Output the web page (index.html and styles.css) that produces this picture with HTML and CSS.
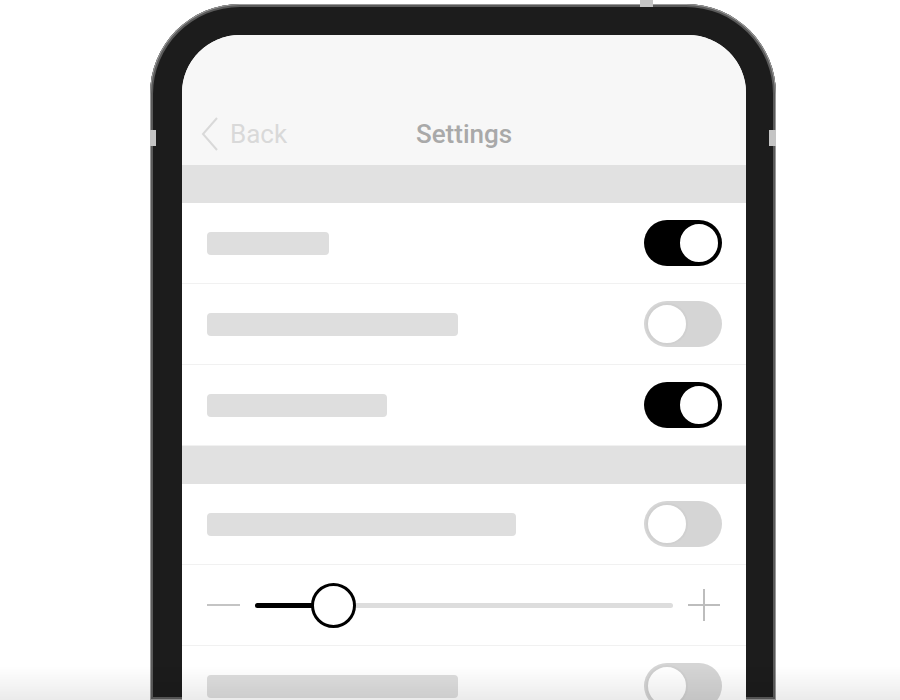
FILE: index.html
```html
<!DOCTYPE html>
<html lang="en">

<head>
    <meta charset="UTF-8">
    <meta name="viewport" content="width=device-width, initial-scale=1.0">
    <title>Settings</title>
    <link rel="stylesheet" href="styles.css">
</head>

<body>
    <div class="phone">
        <!-- antenna bands on the frame -->
        <span class="band band-top"></span>
        <span class="band band-left"></span>
        <span class="band band-right"></span>

        <div class="screen">
            <div class="nav">
                <div class="back">
                    <svg width="20" height="36" viewBox="0 0 20 36">
                        <path d="M17 2 L3 18 L17 34" fill="none" stroke="#d9d9d9" stroke-width="2" />
                    </svg>
                    <span>Back</span>
                </div>
                <div class="title">Settings</div>
                <div></div>
            </div>

            <div class="section-header"></div>
            <div class="row">
                <div class="bar" style="width: 122px"></div>
                <div class="toggle on"><span class="knob"></span></div>
            </div>
            <div class="row">
                <div class="bar" style="width: 251px"></div>
                <div class="toggle"><span class="knob"></span></div>
            </div>
            <div class="row">
                <div class="bar" style="width: 180px"></div>
                <div class="toggle on"><span class="knob"></span></div>
            </div>

            <div class="section-header"></div>
            <div class="row">
                <div class="bar" style="width: 309px"></div>
                <div class="toggle"><span class="knob"></span></div>
            </div>
            <div class="row slider-row">
                <span class="minus"></span>
                <div class="track">
                    <div class="fill"></div>
                    <span class="thumb"></span>
                </div>
                <svg class="plus" width="32" height="32" viewBox="0 0 32 32">
                    <path d="M16 0 V32 M0 16 H32" stroke="#bdbdbd" stroke-width="2" />
                </svg>
            </div>
            <div class="row">
                <div class="bar" style="width: 251px"></div>
                <div class="toggle"><span class="knob"></span></div>
            </div>
        </div>
    </div>
    <div class="fade"></div>
</body>

</html>
```

FILE: styles.css
```css
body {
    font-family: Roboto, "Liberation Sans", Arial, sans-serif;
    margin: 0;
    padding: 0;
    background-color: #ffffff;
    overflow: hidden;
    height: 700px;
}

.phone {
    position: relative;
    width: 626px;
    height: 696px;
    margin: 4px 0 0 150px;
    padding: 31px 30px 0 32px;
    box-sizing: border-box;
    background-color: #1c1c1c;
    border-radius: 90px 90px 0 0;
    box-shadow: inset 0 0 0 1px #9a9a9a, inset 0 0 0 3px #5a5a5a;
}

.band {
    position: absolute;
    background-color: #c4c4c4;
}

.band-top {
    top: -4px;
    left: 490px;
    width: 13px;
    height: 7px;
}

.band-left {
    top: 126px;
    left: 0;
    width: 6px;
    height: 16px;
}

.band-right {
    top: 126px;
    right: 0;
    width: 7px;
    height: 16px;
}

.screen {
    background-color: #ffffff;
    border-radius: 58px 58px 0 0;
    overflow: hidden;
    height: 100%;
}

/* Top navigation bar */
.nav {
    height: 130px;
    background-color: #f7f7f7;
    display: grid;
    grid-template-columns: 1fr auto 1fr;
    align-items: end;
    padding: 0 18px 13px;
    box-sizing: border-box;
}

.back {
    display: flex;
    align-items: center;
    gap: 10px;
    color: #d9d9d9;
    font-size: 26px;
}

.title {
    color: #a9a9a9;
    font-size: 26px;
    font-weight: 500;
    line-height: 36px;
}

.section-header {
    height: 38px;
    background-color: #e1e1e1;
}

.row {
    height: 81px;
    box-sizing: border-box;
    display: flex;
    align-items: center;
    justify-content: space-between;
    padding: 0 24px 0 25px;
    border-bottom: 1px solid #f1f1f1;
}

.bar {
    height: 23px;
    border-radius: 4px;
    background-color: #dedede;
}

/* Switches */
.toggle {
    width: 78px;
    height: 46px;
    border-radius: 23px;
    background-color: #d5d5d5;
    display: flex;
    align-items: center;
    padding: 0 2px;
    box-sizing: border-box;
}

.knob {
    width: 38px;
    height: 38px;
    border-radius: 50%;
    background-color: #ffffff;
    border: 2px solid #d0d0d0;
}

.toggle.on {
    background-color: #000000;
    justify-content: flex-end;
}

.toggle.on .knob {
    border-color: #000000;
}

/* Slider */
.slider-row {
    gap: 15px;
    padding-right: 26px;
}

.minus {
    width: 33px;
    height: 2px;
    background-color: #c4c4c4;
}

.track {
    position: relative;
    flex: 1;
    height: 5px;
    border-radius: 3px;
    background-color: #dddddd;
}

.fill {
    width: 75px;
    height: 5px;
    border-radius: 3px;
    background-color: #000000;
}

.thumb {
    position: absolute;
    left: 56px;
    top: -20px;
    width: 39px;
    height: 39px;
    border-radius: 50%;
    background-color: #ffffff;
    border: 3px solid #000000;
}

.fade {
    position: fixed;
    left: 0;
    right: 0;
    bottom: 0;
    height: 34px;
    background: linear-gradient(rgba(0, 0, 0, 0), rgba(0, 0, 0, 0.08));
}
```
